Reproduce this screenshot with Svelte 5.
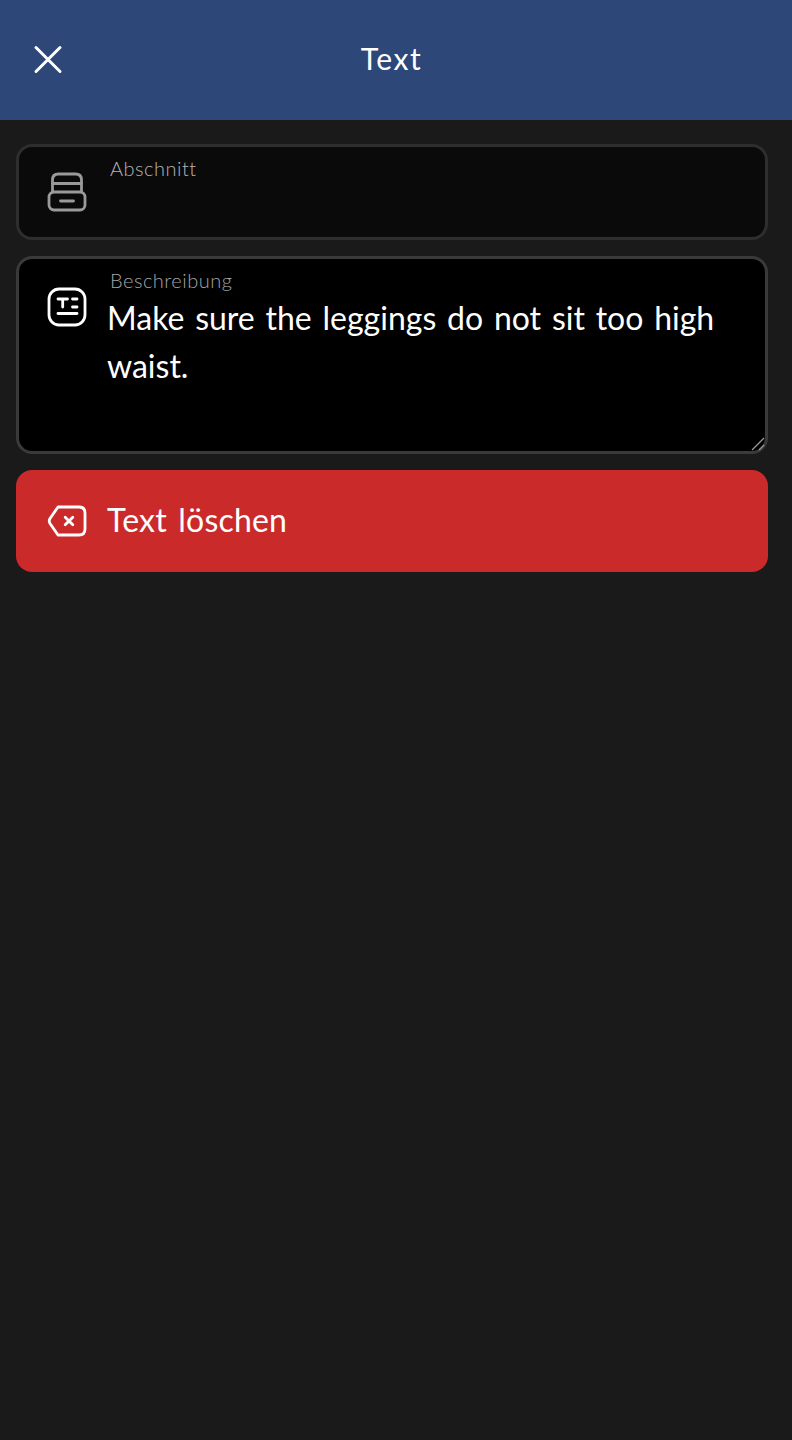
<script>
    let sectionLabel = "Abschnitt";
    let descLabel = "Beschreibung";
    let descText = "Make sure the leggings do not sit too high waist.";
</script>

<div class="page">
    <header class="topbar">
        <button class="close" aria-label="Schließen">
            <svg width="32" height="32" viewBox="0 0 32 32" fill="none" stroke="#fff" stroke-width="3" stroke-linecap="round">
                <path d="M4 3.500 L28 27.500 M28 3.500 L4 27.500" />
            </svg>
        </button>
        <h1>Text</h1>
    </header>

    <main class="content">
        <div class="field section">
            <svg class="icon" width="40" height="40" viewBox="0 0 40 40" fill="none" stroke="#9a9a9a" stroke-width="2.800" stroke-linecap="round" stroke-linejoin="round">
                <path d="M5.500 20 V8 Q5.500 2 11.500 2 H28.500 Q34.500 2 34.500 8 V20" />
                <path d="M5.500 11.500 H34.500" />
                <rect x="2" y="20" width="36" height="18" rx="5" />
                <path d="M13.500 29 H26.500" />
            </svg>
            <div class="body">
                <span class="label">{sectionLabel}</span>
            </div>
        </div>

        <div class="field desc">
            <svg class="icon" width="40" height="40" viewBox="0 0 40 40" fill="none" stroke="#fff" stroke-width="2.800" stroke-linecap="round" stroke-linejoin="round">
                <rect x="2" y="2" width="36" height="36" rx="10" />
                <path d="M11 12 H20.500 M15.700 12 V20" />
                <path d="M25.500 12 H30 M25.500 20 H30" />
                <path d="M11 26.500 H30" />
            </svg>
            <div class="body">
                <span class="label">{descLabel}</span>
                <p class="value">{descText}</p>
            </div>
            <svg class="grip" width="14" height="14" viewBox="0 0 14 14" stroke="#9a9a9a" stroke-width="1.300" fill="none">
                <path d="M1 13 L13 1 M8 13 L13 8" />
            </svg>
        </div>

        <button class="danger">
            <svg width="40" height="32" viewBox="0 0 40 32" fill="none" stroke="#fff" stroke-width="2.800" stroke-linecap="round" stroke-linejoin="round">
                <path d="M11 2 H32 Q38 2 38 8 V24 Q38 30 32 30 H11 L3 18.500 Q1.500 16 3 13.500 Z" />
                <path d="M18.200 12.200 L25.800 19.800 M25.800 12.200 L18.200 19.800" />
            </svg>
            <span>Text löschen</span>
        </button>
    </main>
</div>

<style>
    :global(body) {
        margin: 0;
        background: #1a1a1a;
    }

    .page {
        min-height: 1440px;
        background: #1a1a1a;
        font-family: "Lato", "Open Sans", sans-serif;
        color: #fff;
    }

    .topbar {
        position: relative;
        height: 120px;
        box-sizing: border-box;
        padding: 0 9px 4px 0;
        background: #2c4778;
        display: flex;
        align-items: center;
        justify-content: center;
    }

    .topbar h1 {
        margin: 0;
        font-size: 30px;
        font-weight: 400;
        letter-spacing: 1.500px;
    }

    .close {
        position: absolute;
        left: 32px;
        top: 44px;
        padding: 0;
        border: 0;
        background: none;
        line-height: 0;
    }

    .content {
        display: flex;
        flex-direction: column;
        gap: 16px;
        padding: 24px 24px 0 16px;
    }

    .field {
        position: relative;
        display: flex;
        box-sizing: border-box;
        border: 3px solid #2e2e2e;
        border-radius: 16px;
        padding-left: 28px;
    }

    .section {
        height: 96px;
        background: #0a0a0a;
    }

    .section .icon {
        margin-top: 25px;
    }

    .desc {
        height: 198px;
        background: #000;
        border-color: #3a3a3a;
    }

    .desc .icon {
        margin-top: 28px;
    }

    .body {
        margin-left: 23px;
        flex: 1;
    }

    .label {
        display: block;
        margin-top: 8px;
        font-size: 20px;
        line-height: 26px;
        font-weight: 300;
        letter-spacing: 0.500px;
        color: #b4b4b4;
    }

    .desc .label {
        color: #a4a4a4;
    }

    .value {
        margin: 1px 0 0 -3px;
        font-size: 32px;
        line-height: 48px;
        font-weight: 400;
        word-spacing: 2.600px;
        width: 630px;
    }

    .grip {
        position: absolute;
        right: 0;
        bottom: 0;
    }

    .danger {
        display: flex;
        align-items: center;
        gap: 20px;
        height: 102px;
        padding: 0 0 0 31px;
        border: 0;
        border-radius: 16px;
        background: #cb2a2a;
        color: #fff;
        font-family: inherit;
        font-size: 32px;
        letter-spacing: 0.200px;
        word-spacing: 3px;
        text-align: left;
    }

    .danger span {
        margin-top: -4px;
    }
</style>
